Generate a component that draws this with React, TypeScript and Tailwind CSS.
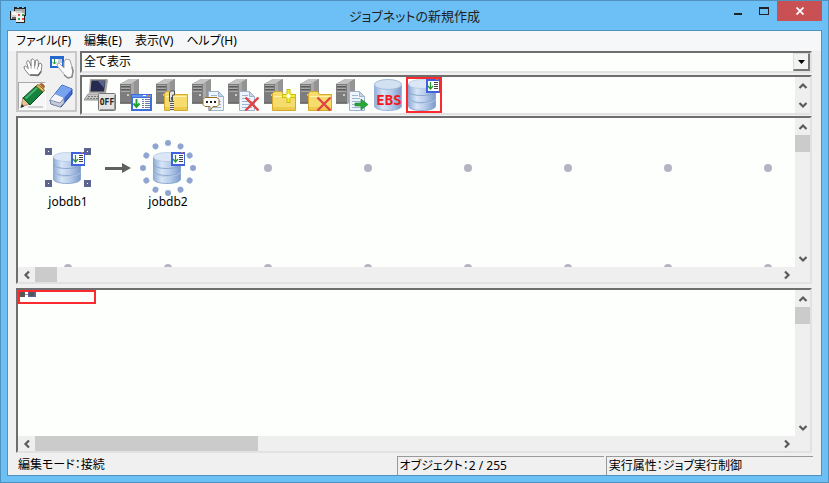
import { ReactNode } from "react";
import clsx from "clsx";

const menuItems = ["ファイル(F)", "編集(E)", "表示(V)", "ヘルプ(H)"];

const Server = () => (
  <g>
    <path d="M0 5 9 0h10v20l-8 5H0z" fill="#777" />
    <path d="M0 5 9 0h10l-8 5z" fill="#c4c4c4" />
    <path d="M0 5h11v20H0z" fill="#7d7d7d" />
    <path d="M11 5 19 0v20l-8 5z" fill="#a9a9a9" />
    <path d="M14 3 19 0v20l-5 3z" fill="#949494" />
    <path d="M1 7.5h9M1 10.5h9" stroke="#5d5d5d" />
    <path d="M1 6.5h9M1 9.5h9M1 12.5h9" stroke="#a8a8a8" />
    <path d="M7 15h2v2H7z" fill="#c8c8c8" />
    <path d="M0 23.5h11" stroke="#6a6a6a" />
  </g>
);

const Folder = () => (
  <g>
    <path d="M8.5 31.5v-17l2-2h7l2 3h12v16z" fill="#f6dc6c" stroke="#d3a82b" />
    <path d="M9.5 17.5h21" stroke="#fff3ad" />
    <path d="M9 28h22v3H9z" fill="#edc94c" />
  </g>
);

const Doc = ({ x }: { x: number }) => (
  <g transform={`translate(${x} 12)`}>
    <path d="M.5.5h10l5 5v14H.5z" fill="#eef4fc" stroke="#9fb1cb" />
    <path d="M10.5.5v5h5z" fill="#c5d5ea" stroke="#9fb1cb" />
    <path d="M3 4.5h6M3 7.5h8M3 10.5h10M3 13.5h10M3 16.5h10" stroke="#9eb4d4" />
  </g>
);

const Cross = () => (
  <path d="m17.5 18.5 13 13m0-13-13 13" stroke="#e04444" strokeWidth="2.4" fill="none" />
);

const DiscGradient = () => (
  <defs>
    <linearGradient id="disc" x1="0" x2="1" y1="0" y2="0">
      <stop offset="0" stopColor="#8fadd6" />
      <stop offset=".3" stopColor="#d7e5f7" />
      <stop offset=".6" stopColor="#b9cdea" />
      <stop offset="1" stopColor="#7c9bc9" />
    </linearGradient>
  </defs>
);

const Database = () => (
  <g transform="translate(2 0)">
    <DiscGradient />
    <path d="M.5 5v22c0 6 27 6 27 0V5z" fill="url(#disc)" stroke="#9cb4d8" />
    <ellipse cx="14" cy="5.5" rx="13.5" ry="5" fill="#d3e0f2" stroke="#a5bbdc" />
  </g>
);

const DatabaseJob = () => (
  <g>
    <DiscGradient />
    {[20, 12, 5].map((y) => (
      <g key={y}>
        <path d={`M.5 ${y}v7c0 6 27 6 27 0v-7z`} fill="url(#disc)" stroke="#7f9dca" strokeWidth=".8" />
        <ellipse cx="14" cy={y} rx="13.5" ry="4.500" fill="#dbe7f6" stroke="#a9bfdf" strokeWidth=".6" />
      </g>
    ))}
    <path d="M18 0h14v14H18z" fill="#3f62dc" />
    <path d="M20 2h11v10H20z" fill="#fff" />
    <path d="M28 0h2v1h-2z" fill="#f07030" />
    <path d="M22.5 3v7m-2.5-3 2.5 3 2.5-3" fill="none" stroke="#1f9a32" strokeWidth="1.2" />
    <path d="M26 3.5h4M26 5.5h4M26 7.5h4M26 9.5h4" stroke="#444" />
  </g>
);

type JobIcon = { name: string; art: ReactNode; active?: boolean };

const jobIcons: JobIcon[] = [
  {
    name: "電源",
    art: (
      <g>
        <path d="M6 0h17l1 1-2 13H5z" fill="#a9a39f" />
        <path d="M7.5 1.5h14l-1.5 11H6.5z" fill="#252b50" />
        <path d="m14 2 7 0-1 7z" fill="#59628d" />
        <path d="M4 15h18l-3 6H0z" fill="#c9c9c9" stroke="#8f8f8f" />
        <path d="M4 17.5h15M3 19.5h14" stroke="#777" strokeDasharray="2 1" />
        <rect x="14.5" y="14.5" width="17" height="17" rx="1" fill="#e2e2e2" stroke="#777" />
        <path d="M16 30.5h15.5M30.500 16v15" stroke="#999" />
        <text x="23" y="26" fontSize="8" textAnchor="middle" fill="#222" fontWeight="700" fontFamily="'DejaVu Sans Mono', monospace">OFF</text>
      </g>
    ),
  },
  {
    name: "ジョブ",
    art: (
      <g>
        <Server />
        <path d="M11 15h21v17H11z" fill="#3f6edb" />
        <path d="M12 16h19v2H12z" fill="#5f94ee" />
        <path d="M13 19h17v11H13z" fill="#fff" />
        <path d="M23 16h3v1h-3z" fill="#fff" />
        <path d="M27 16h3v2h-3z" fill="#ef7737" />
        <path d="M16.5 20v8m-3-3.5 3 3.5 3-3.5" fill="none" stroke="#22a435" strokeWidth="2" />
        <path d="M22 20.5h8M22 22.5h8M22 24.5h8M22 26.5h8M22 28.5h8" stroke="#6d7f9f" strokeDasharray="2 1 5" />
      </g>
    ),
  },
  {
    name: "圧縮",
    art: (
      <g>
        <Server />
        <Folder />
        <path d="M16 23v9" stroke="#eee" strokeWidth="4" />
        <path d="M16 22v10" stroke="#555" strokeWidth="4" strokeDasharray="1 1" />
        <path d="M13.5 22.500v-9l2-1.500h3v4h-2v6z" fill="#e4e4e4" stroke="#555" />
        <path d="M15.500 18v3" stroke="#555" />
      </g>
    ),
  },
  {
    name: "コメント",
    art: (
      <g>
        <Server />
        <Doc x={16} />
        <path d="M13 18.5h12l2 2v5l-2 2h-4l-3 4v-4h-5l-2-2v-5z" fill="#fff" stroke="#9b6e20" />
        <path d="M14 22h2v2h-2zM18 22h2v2h-2zM22 22h2v2h-2z" fill="#222" />
      </g>
    ),
  },
  { name: "ファイル削除", art: <g><Server /><Doc x={11} /><Cross /></g> },
  {
    name: "フォルダ作成",
    art: (
      <g>
        <Server />
        <Folder />
        <path d="M24.5 10v14M18 17h14" stroke="#c9bd12" strokeWidth="4" />
        <path d="M24.5 11v12M19 17h12" stroke="#f5ef32" strokeWidth="2" />
        <path d="m21 13 7 8m0-8-7 8" stroke="#f1e744" />
        <circle cx="24.5" cy="17" r="2" fill="#fff" />
      </g>
    ),
  },
  { name: "フォルダ削除", art: <g><Server /><Folder /><Cross /></g> },
  {
    name: "ファイル転送",
    art: (
      <g>
        <Server />
        <Doc x={13} />
        <path d="M19 24h6v-4l7 5.5-7 5.5v-4h-6z" fill="#27a837" stroke="#138126" strokeWidth=".6" />
      </g>
    ),
  },
  {
    name: "EBS",
    art: (
      <g>
        <Database />
        <text x="17" y="26" fontSize="14" fontWeight="700" textAnchor="middle" fill="#f01820" fontFamily="'DejaVu Sans Mono', monospace">EBS</text>
      </g>
    ),
  },
  { name: "データベース", art: <DatabaseJob />, active: true },
];

const handPath =
  "M7 20 2 14l-1-3 2-1 3 3-2-7 1-2 2 1 2 5V3l2-1 2 2v6l1-6 2-1 1 2v6l1-4h2l1 2-1 8-3 4z";

const tools: { name: string; art: ReactNode; active?: boolean }[] = [
  {
    name: "移動",
    art: (
      <g transform="translate(4 3) scale(.9)">
        <path d={handPath} fill="#fff" stroke="#777" />
        <path d="M9 10v3m4-3v3m3-2v3" stroke="#999" fill="none" />
        <path d="M8 20h9l3-4" stroke="#666" fill="none" strokeWidth="1.5" />
      </g>
    ),
  },
  {
    name: "選択",
    art: (
      <g>
        <path d="M2 2h14v12H2z" fill="#2668cf" />
        <path d="M4 5h10v7H4z" fill="#fff" />
        <path d="M6.5 5v5m-2-2 2 2 2-2" fill="none" stroke="#1f9b36" />
        <path d="M10 6h4M10 8h4" stroke="#8899bb" />
        <path d="m9 10 2-1 5 5V8l2-3 4 1 2 7 1 4-1 6-4 1-4-4-6-7z" fill="#fafafa" stroke="#a4a4a4" />
        <path d="m16 21 4 3 4-1 1-6-1-4" stroke="#8a8a8a" strokeWidth="1.5" fill="none" />
      </g>
    ),
  },
  {
    name: "作成",
    active: true,
    art: (
      <g>
        <path d="M9 24h15" stroke="#d2d2d2" strokeWidth="2" />
        <path d="m2 24 2-10 7 7z" fill="#e6c391" stroke="#8a6b3f" strokeWidth=".6" />
        <path d="m1.5 25 1.5-4 2 2.5z" fill="#222" />
        <path d="M4 15 17 3l7 6-13 13z" fill="#17813f" stroke="#0c4d28" />
        <path d="M6.500 15.500 18 5" stroke="#44b56c" strokeWidth="2" />
        <path d="m17 3 2-1.500 6.500 5.500-1.500 2z" fill="#e3c15d" stroke="#80611c" />
        <path d="m20 1 3-1 3 3-1 3z" fill="#a8622e" />
      </g>
    ),
  },
  {
    name: "削除",
    art: (
      <g>
        <path d="m2 17 12-15 10 4v5L13 24l-10-3z" fill="#3e69cb" stroke="#234a9f" />
        <path d="m7 11 7-9 10 4-8 9z" fill="#78a4ef" />
        <path d="m2 17 5-6 9 4-4 5z" fill="#f6f6fa" />
        <path d="m2 17 10 3 4-5v5l-4 4-9-3z" fill="#c9cad6" stroke="#7a86a7" strokeWidth=".7" />
      </g>
    ),
  },
];

type Direction = "up" | "down" | "left" | "right";

const chevrons: Record<Direction, string> = {
  up: "M.5 6 4 2.500 7.500 6",
  down: "M.5 2 4 5.500 7.500 2",
  left: "M6 .5 2.500 4 6 7.500",
  right: "M2 .5 5.500 4 2 7.500",
};

const ScrollButton = ({ direction, label }: { direction: Direction; label: string }) => (
  <button type="button" aria-label={label} className="flex size-[17px] shrink-0 items-center justify-center">
    <svg viewBox="0 0 8 8" className="size-2 overflow-visible">
      <path d={chevrons[direction]} fill="none" stroke="#5a5a5a" strokeWidth="2.2" />
    </svg>
  </button>
);

type ScrollPanelProps = {
  className?: string;
  thumb: number;
  children: ReactNode;
};

const ScrollPanel = ({ className, thumb, children }: ScrollPanelProps) => (
  <section className={clsx("flex flex-col border-2 border-t-[#6e6e6e] border-l-[#6e6e6e] border-r-[#e2e2e2] border-b-[#e2e2e2] bg-[#efefef]", className)}>
    <div className="flex min-h-0 flex-1">
      <div className="relative min-w-0 flex-1 overflow-hidden bg-[#fcfffc]">{children}</div>
      <div className="flex w-[15px] flex-col items-center">
        <ScrollButton direction="up" label="上へ" />
        <div className="w-full flex-1">
          <div className="h-[17px] bg-[#cbcbcb]" />
        </div>
        <ScrollButton direction="down" label="下へ" />
      </div>
    </div>
    <div className="mr-[15px] flex h-[15px] items-center">
      <ScrollButton direction="left" label="左へ" />
      <div className="h-full flex-1">
        <div className="h-full bg-[#cbcbcb]" style={{ width: `${thumb}%` }} />
      </div>
      <ScrollButton direction="right" label="右へ" />
    </div>
  </section>
);

const JobNode = ({ name, className, children }: { name: string; className: string; children: ReactNode }) => (
  <div className={clsx("absolute top-[23px] flex w-[54px] flex-col items-center bg-[#fcfffc]", className)}>
    <svg viewBox="-11 -11 54 54" className="size-[54px] overflow-visible" aria-hidden="true">
      {children}
      <g transform="translate(1 0)">
        <DatabaseJob />
      </g>
    </svg>
    <span className="text-[12px] leading-[14px]">{name}</span>
  </div>
);

const ringAngles = [0, 30, 60, 90, 120, 150, 180, 210, 240, 270, 300, 330];

const Canvas = () => (
  <>
    <svg className="absolute inset-0 size-full" aria-hidden="true">
      <defs>
        <pattern id="grid" width="100" height="100" patternUnits="userSpaceOnUse">
          <circle cx="50" cy="50" r="4" fill="#b4b4c2" />
        </pattern>
      </defs>
      <rect width="100%" height="100%" fill="url(#grid)" />
      <path d="M87 49h17v-4l9 5-9 5v-3H87z" fill="#606060" />
    </svg>
    <JobNode name="jobdb1" className="left-[23px]">
      {[-7, 32].map((x) =>
        [-4, 28].map((y) => (
          <g key={`${x}-${y}`}>
            <rect x={x} y={y} width="7" height="7" fill="#5c6590" />
            <rect x={x + 3} y={y + 3} width="1" height="1" fill="#fff" />
          </g>
        ))
      )}
    </JobNode>
    <JobNode name="jobdb2" className="left-[123px]">
      {ringAngles.map((angle) => (
        <circle key={angle} cx="16" cy="-9" r="3" fill="#8fa4d0" transform={`rotate(${angle} 16 16)`} />
      ))}
    </JobNode>
  </>
);

const TitleBar = () => (
  <header className="flex h-[29px] items-start pl-[9px]">
    <svg viewBox="0 0 18 18" className="mt-[5px] size-[18px]" aria-hidden="true">
      <path d="M4 1h3v1h2V1h3v1h2V1h2v9h-1v7H6v-3H0V5h4z" fill="#222" />
      <path d="M5 3h10v6H5z" fill="#a9a9a9" />
      <path d="M1 5h11v8H1z" fill="#d2d2d2" />
      <path d="M2 6h4v3H2z" fill="#f4f4f4" />
      <path d="M6 7h8v9H6z" fill="#f0f0f0" />
      <path d="M8 8h2v2H8zM12 12h2v2h-2z" fill="#e04b3e" />
      <path d="M12 8h2v2h-2zM8 12h2v2H8z" fill="#2f9f44" />
      <path d="M2 11h4v2H2z" fill="#666" />
    </svg>
    <h1 className="mt-[5px] flex-1 pl-[76px] text-center text-[13px] leading-5 text-[#222]">ジョブネットの新規作成</h1>
    <button type="button" aria-label="最小化" className="flex h-5 w-[26px] items-center justify-center">
      <svg viewBox="0 0 8 8" className="size-2" aria-hidden="true">
        <path d="M0 6h8v2H0z" fill="#222" />
      </svg>
    </button>
    <button type="button" aria-label="最大化" className="flex h-5 w-[26px] items-center justify-center">
      <svg viewBox="0 0 10 8" className="h-2 w-[10px]" aria-hidden="true">
        <path d="M0 0h10v8H0zm1 2v5h8V2z" fill="#222" fillRule="evenodd" />
      </svg>
    </button>
    <button type="button" aria-label="閉じる" className="mr-[6px] flex h-5 w-[45px] items-center justify-center bg-[#c95053]">
      <svg viewBox="0 0 8 8" className="size-2" aria-hidden="true">
        <path d="M.5.5l7 7m0-7l-7 7" stroke="#fff" strokeWidth="1.8" />
      </svg>
    </button>
  </header>
);

const Toolbar = () => (
  <div className="mb-px flex items-start gap-[3px]">
    <div className="grid shrink-0 grid-cols-[28px_28px] gap-px border-2 border-[#c8c8c8]">
      {tools.map((tool) => (
        <button
          key={tool.name}
          type="button"
          aria-label={tool.name}
          aria-pressed={!!tool.active}
          className={clsx(
            "flex size-7 items-center justify-center border",
            tool.active ? "border-t-[#aaa] border-l-[#aaa] border-r-white border-b-white bg-[#f6f6f6]" : "border-transparent"
          )}
        >
          <svg viewBox="0 0 26 26" className="size-[26px]">{tool.art}</svg>
        </button>
      ))}
    </div>
    <div className="flex min-w-0 flex-1 flex-col gap-[2px]">
      <div className="flex h-[22px] border-2 border-t-[#6e6e6e] border-l-[#6e6e6e] border-r-[#e2e2e2] border-b-[#e2e2e2] bg-[#fcfffc]">
        <select id="filter" aria-label="表示" className="min-w-0 flex-1 appearance-none bg-transparent pl-[2px] text-[12px] leading-4 outline-none">
          <option>全て表示</option>
        </select>
        <label htmlFor="filter" aria-hidden="true" className="flex w-[17px] items-center justify-center border-t border-l border-r-2 border-b-2 border-t-[#ddd] border-l-[#ddd] border-r-[#777] border-b-[#777] bg-[#f2f2f2]">
          <svg viewBox="0 0 7 4" className="h-1 w-[7px]">
            <path d="M0 0h7L3.5 4z" />
          </svg>
        </label>
      </div>
      <div className="flex border-2 border-t-[#6e6e6e] border-l-[#6e6e6e] border-r-[#e2e2e2] border-b-[#e2e2e2] bg-[#fcfffc]">
        <div className="flex flex-1">
          {jobIcons.map((icon) => (
            <button
              key={icon.name}
              type="button"
              aria-label={icon.name}
              className={clsx("size-9 border-2", icon.active ? "border-[#fa2a2e]" : "border-transparent")}
            >
              <svg viewBox="0 0 32 32" className="size-8">{icon.art}</svg>
            </button>
          ))}
        </div>
        <div className="flex w-[15px] flex-col items-center justify-between bg-[#efefef]">
          <ScrollButton direction="up" label="上へ" />
          <ScrollButton direction="down" label="下へ" />
        </div>
      </div>
    </div>
  </div>
);

export default function App() {
  return (
    <div className="flex min-h-screen flex-col border border-[#4e92bd] bg-[#6cc0f5] font-['Noto_Sans','Noto_Sans_CJK_JP',sans-serif] text-black [font-feature-settings:'palt']">
      <TitleBar />
      <main className="mx-[6px] mb-[6px] flex flex-1 flex-col border border-[#4e92bd] bg-[#f0f0f0]">
        <nav className="flex h-5 items-center gap-[13px] bg-[#f5f7f8] pl-2">
          {menuItems.map((item) => (
            <button key={item} type="button" className="text-[12px] leading-5">
              {item}
            </button>
          ))}
        </nav>
        <div className="flex flex-1 flex-col pr-[9px] pl-2">
          <Toolbar />
          <ScrollPanel className="mb-1 grow basis-[168px]" thumb={3}>
            <Canvas />
          </ScrollPanel>
          <ScrollPanel className="mb-[3px] grow basis-[165px]" thumb={30}>
            <div className="h-[14px] w-[78px] border-2 border-[#fa2a2e]">
              <svg viewBox="0 0 20 8" className="h-2 w-5" aria-hidden="true">
                <path d="M0 0h5v5H0z" fill="#555" />
                <path d="M5 2h3v1H5z" fill="#999" />
                <path d="M8 0h8v5H8z" fill="#5c6590" />
                <path d="M9 0h5v4H9z" fill="#555" />
              </svg>
            </div>
          </ScrollPanel>
        </div>
        <footer className="flex h-[19px] gap-[2px] pr-2 pl-2 text-[12px] leading-[18px]">
          <div className="flex-1 pl-[2px]">編集モード：接続</div>
          <div className="w-[26%] border-t border-l border-[#999] pl-[2px]">オブジェクト：2 / 255</div>
          <div className="w-[26%] border-t border-l border-[#999] pl-[2px]">実行属性：ジョブ実行制御</div>
        </footer>
      </main>
    </div>
  );
}
